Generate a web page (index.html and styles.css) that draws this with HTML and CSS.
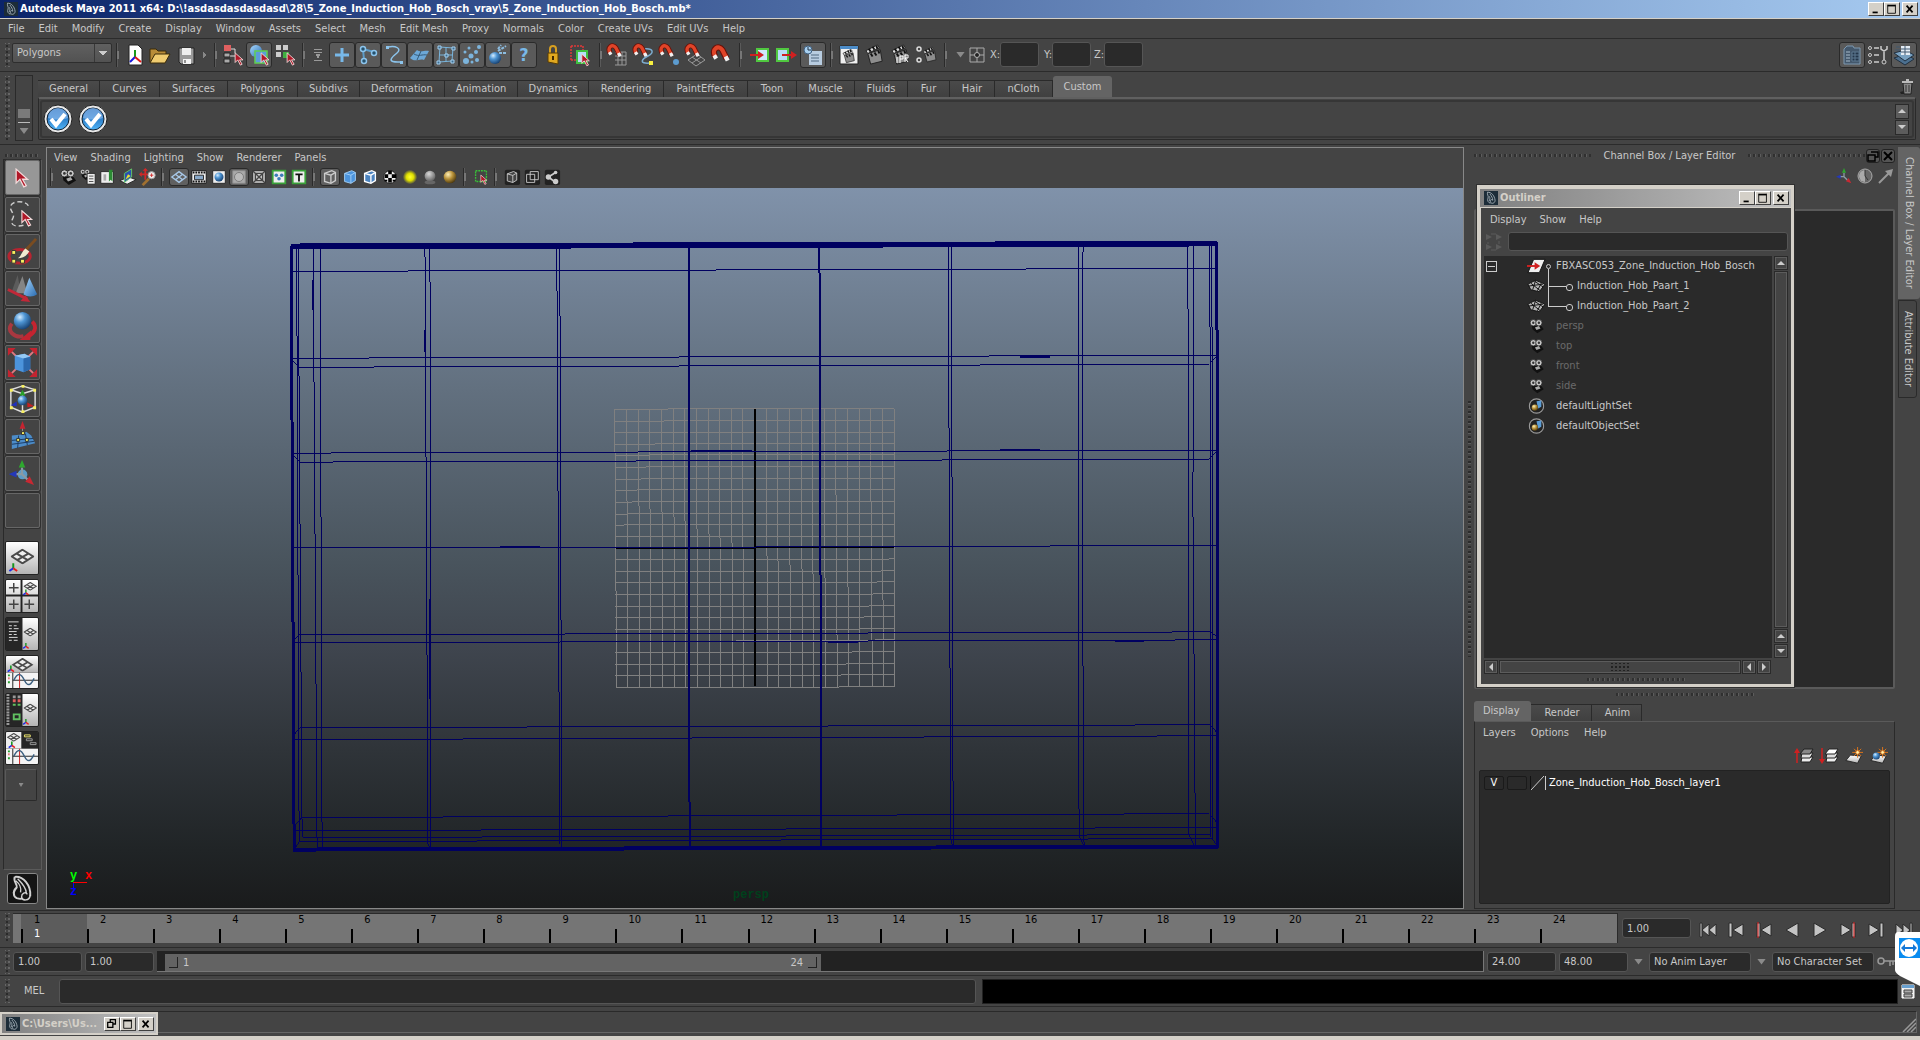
FILE: index.html
```html
<!DOCTYPE html>
<html lang="en">

<head>
    <meta charset="UTF-8">
    <meta name="viewport" content="width=device-width, initial-scale=1.0">
    <title>Autodesk Maya 2011 x64</title>
    <link rel="stylesheet" href="styles.css">
</head>

<body>
    <!-- shared icons -->
    <svg class="defs" width="0" height="0" aria-hidden="true">
        <defs>
            <linearGradient id="gBlue" x1="0" y1="0" x2="1" y2="1">
                <stop offset="0" stop-color="#a8d8ff" />
                <stop offset="1" stop-color="#2a6cb0" />
            </linearGradient>
            <radialGradient id="gBall" cx=".35" cy=".3" r=".75">
                <stop offset="0" stop-color="#d4ecff" />
                <stop offset=".4" stop-color="#4f96d4" />
                <stop offset="1" stop-color="#153e6e" />
            </radialGradient>
            <radialGradient id="gGold" cx=".35" cy=".3" r=".8">
                <stop offset="0" stop-color="#fff0b8" />
                <stop offset=".45" stop-color="#b8923a" />
                <stop offset="1" stop-color="#3a2a08" />
            </radialGradient>
            <radialGradient id="gGrey" cx=".4" cy=".3" r=".75">
                <stop offset="0" stop-color="#d8d8d8" />
                <stop offset="1" stop-color="#5a5a5a" />
            </radialGradient>
            <radialGradient id="gGlow">
                <stop offset="0" stop-color="#ffff30" />
                <stop offset=".5" stop-color="#e0e000" />
                <stop offset="1" stop-color="#e0e000" stop-opacity="0" />
            </radialGradient>
            <linearGradient id="gPaper" x1="0" y1="0" x2="0" y2="1">
                <stop offset="0" stop-color="#ffffff" />
                <stop offset="1" stop-color="#b4b4b4" />
            </linearGradient>
            <linearGradient id="gCheck" x1="0" y1="0" x2="0" y2="1">
                <stop offset="0" stop-color="#0c4c9c" />
                <stop offset="1" stop-color="#50b4f8" />
            </linearGradient>
        </defs>
        <symbol id="maya" viewBox="0 0 24 24">
            <rect width="24" height="24" fill="#1c2c38" />
            <path d="M6 2c7 0 12 6 13 14M6 2c-1 4 2 6 1 10-2 4 0 8 4 9M10 5c3 4 5 7 5 11M9 9c2 3 1 6 0 8M19 16c0 5-6 7-8 3-1-3 2-6 4-3" fill="none" stroke="#a8b4bc" stroke-width="1.500" />
        </symbol>
        <symbol id="cursor" viewBox="0 0 12 16">
            <path d="M1 1v11l3-3 3 6 2-1-3-5h4z" fill="#b01828" stroke="#f4dcdc" />
        </symbol>
        <symbol id="magnet" viewBox="0 0 24 24">
            <path d="M5 12C1 5 8 0 12 6l4 8" fill="none" stroke="#6a1008" stroke-width="6" />
            <path d="M5 12C1 5 8 0 12 6l4 8" fill="none" stroke="#e04428" stroke-width="4" />
            <path d="M4 11l2 3M15 12l2 4" stroke="#f0f0f0" stroke-width="4" />
        </symbol>
        <symbol id="clap" viewBox="0 0 24 24">
            <path d="M5 11l13-4 2 12-12 3z" fill="#8d8d8d" stroke="#202020" />
            <path d="M3 8L15 2l2 3L5 11z" fill="#dcdcdc" stroke="#222" />
            <path d="M6 6l2 3M10 4l2 3M14 3l1 3M8 11l2 3M12 10l2 3M16 8l1 3" stroke="#111" stroke-width="2" />
        </symbol>
        <symbol id="camera" viewBox="0 0 20 20">
            <path d="M4 9l12 1 3 4-8 5-6-5z" fill="#111" />
            <circle cx="6" cy="6" r="4" fill="#c8c8c8" stroke="#222" />
            <circle cx="13" cy="6" r="4" fill="#c8c8c8" stroke="#222" />
            <circle cx="6" cy="6" r="1.500" fill="#333" />
            <circle cx="13" cy="6" r="1.500" fill="#333" />
            <path d="M8 12l5-2 2 3-5 2z" fill="#aaa" />
        </symbol>
        <symbol id="axes" viewBox="0 0 24 24">
            <path d="M12 13V7M12 13H6M12 13l5 5" stroke="#8a9aa4" stroke-width="2" />
            <path d="M9 7l3-7 3 7z" fill="#2ea82e" />
            <path d="M7 10v6l-7-3z" fill="#2438b8" />
            <path d="M15 20l4-5 4 8z" fill="#c82832" />
        </symbol>
        <symbol id="gridicon" viewBox="0 0 24 16">
            <path d="M12 1L23 8 12 15 1 8zM6 5l12 7M18 5L6 12" fill="#eee" stroke="#4a4a4a" stroke-width="2" />
        </symbol>
        <symbol id="tripod" viewBox="0 0 10 10">
            <path d="M5 6V1" stroke="#14941c" stroke-width="2" />
            <path d="M5 6L1 9" stroke="#1c2ce8" stroke-width="2" />
            <path d="M5 6l4 3" stroke="#e81c1c" stroke-width="2" />
        </symbol>
        <symbol id="curve" viewBox="0 0 33 16">
            <rect width="33" height="16" fill="#f4f4f4" />
            <path d="M7 0v16M7 8h26" stroke="#222" />
            <path d="M3 2v2M3 9v2" stroke="#28a030" stroke-width="2" />
            <path d="M3 5v2M14 0v16" stroke="#d02020" />
            <path d="M8 8C12 0 15 0 19 8s7 4 10-2" fill="none" stroke="#3c6080" stroke-width="1.500" />
        </symbol>
        <symbol id="cube" viewBox="0 0 16 16">
            <path d="M2 4l8-3 4 2v9l-5 3-7-2z" />
            <path d="M2 4l7 2 5-3M9 6v9" fill="none" />
        </symbol>
        <symbol id="mesh" viewBox="0 0 20 16">
            <path d="M1 6l8-4 10 4-6 8-9-2z" fill="#b4b4b4" stroke="#111" />
            <path d="M4 5l10 8M8 3l9 6M9 2L6 12M15 5l-4 8M2 8l15-2" stroke="#111" />
        </symbol>
        <symbol id="set" viewBox="0 0 20 20">
            <circle cx="10" cy="10" r="9" fill="#222" stroke="#999" stroke-width="1.500" />
            <path d="M10 4l6-1v8l-4 2z" fill="#5c9cd4" />
            <circle cx="8" cy="12" r="4" fill="url(#gGold)" />
        </symbol>
        <symbol id="checkball" viewBox="0 0 30 30">
            <circle cx="15" cy="15" r="14" fill="#e8e8e8" stroke="#202020" />
            <circle cx="15" cy="15" r="11" fill="url(#gCheck)" stroke="#123" />
            <path d="M5 14a10 10 0 0 1 20 0c-6 2-14 2-20 0z" fill="#8cbcf0" fill-opacity=".7" />
            <path d="M8 15l5 6 9-11" fill="none" stroke="#fff" stroke-width="4" />
        </symbol>
        <symbol id="layers" viewBox="0 0 20 16">
            <path d="M8 9h11l-3 5H7z" fill="#eee" stroke="#222" />
            <path d="M8 5h11l-3 5H7z" fill="#ddd" stroke="#222" />
            <path d="M10 1h9l-3 5H6z" stroke="#222" />
        </symbol>
        <symbol id="sheet" viewBox="0 0 20 20">
            <path d="M6 9l12 1-4 8-13-3z" fill="url(#gPaper)" stroke="#222" />
            <path d="M14 0v12M8 6h12M10 2l8 8M18 2l-8 8" stroke="#e87818" />
            <circle cx="14" cy="6" r="2" fill="#fff4b0" stroke="#e87818" />
        </symbol>
    </svg>

    <header class="titlebar">
        <svg class="i16"><use href="#maya" /></svg>
        <h1>Autodesk Maya 2011 x64: D:\!asdasdasdasdasd\28\5_Zone_Induction_Hob_Bosch_vray\5_Zone_Induction_Hob_Bosch.mb*</h1>
        <div class="winbtns">
            <button type="button" aria-label="Minimize"><svg viewBox="0 0 16 14"><path d="M4 11h6" stroke="#000" stroke-width="2" /></svg></button>
            <button type="button" aria-label="Maximize"><svg viewBox="0 0 16 14"><path d="M3 2v10h9V2" fill="none" stroke="#000" /><path d="M3 3h9" stroke="#000" stroke-width="2" /></svg></button>
            <button type="button" class="close" aria-label="Close"><svg viewBox="0 0 16 14"><path d="M4 3l7 8M11 3l-7 8" stroke="#000" stroke-width="2" /></svg></button>
        </div>
    </header>

    <nav class="menubar">
        <button type="button">File</button><button type="button">Edit</button><button type="button">Modify</button><button type="button">Create</button><button type="button">Display</button><button type="button">Window</button><button type="button">Assets</button><button type="button">Select</button><button type="button">Mesh</button><button type="button">Edit Mesh</button><button type="button">Proxy</button><button type="button">Normals</button><button type="button">Color</button><button type="button">Create UVs</button><button type="button">Edit UVs</button><button type="button">Help</button>
    </nav>

    <section class="status">
        <span class="grip"></span>
        <select class="menuset" aria-label="Menu set">
            <option>Polygons</option>
        </select>
        <i class="sep"></i>
        <button type="button" class="tool" aria-label="New scene"><svg viewBox="0 0 24 24"><path d="M6 2h9l4 4v16H6z" fill="#fff" stroke="#222" /><path d="M12 14V7" stroke="#1a9a1a" stroke-width="2" /><path d="M12 14l-5 5" stroke="#1818e0" stroke-width="2" /><path d="M12 14l6 5" stroke="#e01818" stroke-width="2" /></svg></button>
        <button type="button" class="tool" aria-label="Open scene"><svg viewBox="0 0 24 24"><path d="M1 19V6h6l2 2h8v4" fill="#b88c38" stroke="#3a2a08" /><path d="M1 20l5-9h15l-5 9z" fill="#f0cc70" stroke="#3a2a08" /></svg></button>
        <button type="button" class="tool" aria-label="Save scene"><svg viewBox="0 0 24 24"><path d="M4 5h15v16H6l-2-2z" fill="#9a9a9a" stroke="#222" /><path d="M7 5h9v7H7z" fill="#eee" /><path d="M8 16h8v5H8z" fill="#f4f4f4" /><path d="M10 17v3" stroke="#333" /></svg></button>
        <i class="more"></i>
        <i class="sep"></i>
        <button type="button" class="tool" aria-label="Select by hierarchy"><svg viewBox="0 0 24 24"><path d="M3 2h7v6H3z" fill="#e06060" /><path d="M3 10h6v4H3zM3 16h6v4H3z" fill="#aaa" stroke="#222" /><path d="M10 6h4v4M9 13h5" fill="none" stroke="#ddd" /><use href="#cursor" x="13" y="9" width="11" height="14" /></svg></button>
        <button type="button" class="tool on" aria-label="Select by object"><svg viewBox="0 0 24 24"><circle cx="9" cy="8" r="6" fill="url(#gBlue)" /><path d="M8 8h12v12H8z" fill="#5c9cd8" stroke="#60d050" stroke-width="1.500" /><use href="#cursor" x="13" y="9" width="11" height="14" /></svg></button>
        <button type="button" class="tool" aria-label="Select by component"><svg viewBox="0 0 24 24"><path d="M3 2h5v5H3zM10 2h5v5h-5zM3 9h5v5H3z" fill="#ccc" /><path d="M10 9h6v6h-6z" fill="#40b040" /><use href="#cursor" x="13" y="9" width="11" height="14" /></svg></button>
        <i class="sep"></i>
        <i class="mask"></i>
        <button type="button" class="tool on" aria-label="Handles"><svg viewBox="0 0 24 24"><path d="M12 5v14M5 12h14" stroke="#78b8e8" stroke-width="3" /></svg></button>
        <button type="button" class="tool on" aria-label="Joints"><svg viewBox="0 0 24 24"><path d="M7 6l11 3M7 6l1 11" stroke="#5c9cc8" stroke-width="2" /><circle cx="7" cy="6" r="2.500" fill="#26526e" stroke="#8cc4ec" stroke-width="1.500" /><circle cx="18" cy="10" r="2.500" fill="#26526e" stroke="#8cc4ec" stroke-width="1.500" /><circle cx="8" cy="18" r="2.500" fill="#26526e" stroke="#8cc4ec" stroke-width="1.500" /></svg></button>
        <button type="button" class="tool on" aria-label="Curves"><svg viewBox="0 0 24 24"><path d="M6 4c8-2 14 2 9 6s-12 10 4 9" fill="none" stroke="#8cc4ec" stroke-width="1.500" /><path d="M4 3h3v3H4zM18 18h3v3h-3z" fill="#8cc4ec" /></svg></button>
        <button type="button" class="tool on" aria-label="Surfaces"><svg viewBox="0 0 24 24"><path d="M2 15l7-8c4 3 7 0 12 1l-5 9c-5-2-9 3-14-2z" fill="#6ca8d8" /><path d="M6 11c5 3 8 0 13 1M13 8l-4 9" stroke="#365a78" fill="none" /></svg></button>
        <button type="button" class="tool on" aria-label="Deformations"><svg viewBox="0 0 24 24"><path d="M6 4l13 1-1 13-13 1zM12 4v15M5 12h14" fill="none" stroke="#78b4dc" /><path d="M4 3h3v3H4zM18 4h3v3h-3zM3 18h3v3H3zM17 17h3v3h-3zM11 11h3v3h-3z" fill="#3c6c90" stroke="#a4d0f0" /></svg></button>
        <button type="button" class="tool on" aria-label="Dynamics"><svg viewBox="0 0 24 24"><g fill="#7cb4dc"><circle cx="6" cy="18" r="3" /><circle cx="11" cy="13" r="2.500" /><circle cx="16" cy="9" r="2" /><circle cx="19" cy="4" r="2" /><circle cx="5" cy="9" r="1.500" /><circle cx="9" cy="5" r="1.500" /><circle cx="17" cy="17" r="2" /><circle cx="12" cy="19" r="1.500" /></g></svg></button>
        <button type="button" class="tool on" aria-label="Rendering"><svg viewBox="0 0 24 24"><circle cx="9" cy="15" r="6" fill="url(#gBall)" /><path d="M12 8l8-5M13 10h8M12 6l3-4" stroke="#8cbce0" stroke-width="2" stroke-dasharray="3 1" /></svg></button>
        <button type="button" class="tool on help" aria-label="Miscellaneous">?</button>
        <i class="gap3"></i>
        <button type="button" class="tool" aria-label="Lock selection"><svg viewBox="0 0 24 24"><path d="M9 11V6c0-4 6-4 6 0v5" fill="none" stroke="#d8a020" stroke-width="2" /><path d="M7 10h10v11l-10-2z" fill="#e0a820" stroke="#5a3c00" /><path d="M12 13v4" stroke="#402800" stroke-width="2" /></svg></button>
        <button type="button" class="tool" aria-label="Highlight selection"><svg viewBox="0 0 24 24"><path d="M4 3h12M4 3v14M4 17h5M16 3v4" fill="none" stroke="#e03838" stroke-width="1.500" stroke-dasharray="2 1" /><path d="M10 8h10v12H10z" fill="#b8dcf8" stroke="#40c040" stroke-width="2" /><use href="#cursor" x="14" y="10" width="10" height="14" /></svg></button>
        <i class="gap3"></i>
        <i class="sep"></i>
        <button type="button" class="tool" aria-label="Snap to grids"><svg viewBox="0 0 24 24"><path d="M9 9h11v13H9M12 9v13M16 9v13M9 13h11M9 17h11" fill="none" stroke="#999" /><use href="#magnet" width="20" height="20" /></svg></button>
        <button type="button" class="tool" aria-label="Snap to curves"><svg viewBox="0 0 24 24"><path d="M12 6c10-1 10 4 4 7s-10 8 2 7" fill="none" stroke="#7cacd0" stroke-width="1.500" /><path d="M17 18h4v4h-4z" fill="#f8f040" /><use href="#magnet" width="20" height="20" /></svg></button>
        <button type="button" class="tool" aria-label="Snap to points"><svg viewBox="0 0 24 24"><use href="#magnet" width="20" height="20" /><circle cx="18" cy="19" r="3" fill="#5c9cd0" /></svg></button>
        <button type="button" class="tool" aria-label="Snap to view planes"><svg viewBox="0 0 24 24"><path d="M4 17l9-6 8 6-9 6zM8 14l9 6M17 14l-9 6" fill="none" stroke="#999" /><use href="#magnet" width="20" height="20" /></svg></button>
        <button type="button" class="tool" aria-label="Make live"><svg viewBox="0 0 24 24"><use href="#magnet" y="1" width="25" height="25" /></svg></button>
        <i class="sep"></i>
        <i class="gap3"></i>
        <button type="button" class="tool" aria-label="Inputs"><svg viewBox="0 0 24 24"><path d="M8 6h11v12H8z" fill="#d0e8fc" stroke="#50c840" stroke-width="2" /><path d="M1 12h9" stroke="#d02020" stroke-width="2" /><path d="M9 8l6 4-6 4z" fill="#d02020" /></svg></button>
        <button type="button" class="tool" aria-label="Outputs"><svg viewBox="0 0 24 24"><path d="M2 6h11v12H2z" fill="#b8dcf8" stroke="#50c840" stroke-width="2" /><path d="M7 12h11" stroke="#d02020" stroke-width="2" /><path d="M16 8l6 4-6 4z" fill="#d02020" /></svg></button>
        <button type="button" class="tool on" aria-label="Construction history"><svg viewBox="0 0 24 24"><path d="M8 8h13v14H8z" fill="#b8cce0" /><path d="M10 12h8M10 15h8M10 18h8" stroke="#506880" /><circle cx="7" cy="7" r="4" fill="#a8d0f0" stroke="#406080" /><path d="M7 4v3h3" fill="none" stroke="#234" /></svg></button>
        <i class="sep"></i>
        <button type="button" class="tool" aria-label="Render view"><svg viewBox="0 0 24 24"><path d="M3 3h18v18H3z" fill="#f0f0f0" stroke="#222" /><path d="M3 3h18v3H3z" fill="#4c8cc8" /><use href="#clap" x="4" y="5" width="16" height="16" /></svg></button>
        <button type="button" class="tool" aria-label="Render frame"><svg viewBox="0 0 24 24"><use href="#clap" width="23" height="23" /></svg></button>
        <button type="button" class="tool" aria-label="IPR render"><svg viewBox="0 0 24 24"><use href="#clap" width="23" height="23" /><path d="M8 14v6M11 20v-7h3v3h-3M16 19v-7h3v3h-3l3 4" stroke="#fff" fill="none" /></svg></button>
        <button type="button" class="tool" aria-label="Render settings"><svg viewBox="0 0 24 24"><use href="#clap" x="6" width="18" height="23" /><circle cx="4" cy="6" r="2" fill="none" stroke="#ddd" stroke-width="1.500" /><circle cx="4" cy="17" r="2" fill="none" stroke="#ddd" stroke-width="1.500" /></svg></button>
        <i class="sep"></i>
        <button type="button" class="droparrow" aria-label="Input mode"></button>
        <svg class="xyz" viewBox="0 0 16 16"><path d="M1 1h14v14H1zM8 1v4M8 11v4M1 8h4M11 8h4" fill="none" stroke="#aaa" /><circle cx="8" cy="8" r="2.500" fill="#222" stroke="#bbb" /></svg>
        <label for="fx">X:</label><input id="fx" type="text">
        <label for="fy">Y:</label><input id="fy" type="text">
        <label for="fz">Z:</label><input id="fz" type="text">
        <div class="right">
            <button type="button" class="tool on" aria-label="Attribute Editor"><svg viewBox="0 0 24 24"><path d="M4 6l3-3h6l1 2h6v16H4z" fill="#44586c" stroke="#7c98b0" /><path d="M6 9h4M6 12h4M6 15h4M6 18h4" stroke="#a8bccc" /><path d="M12 9h7v9h-7zM15 9v9M12 12h7M12 15h7" fill="#24364a" stroke="#5c7890" /></svg></button>
            <button type="button" class="tool" aria-label="Tool Settings"><svg viewBox="0 0 24 24"><g fill="none" stroke="#ccc"><circle cx="4" cy="5" r="1.500" /><circle cx="4" cy="12" r="1.500" /><circle cx="4" cy="19" r="1.500" /><path d="M8 5h5M8 12h5M8 19h5M18 8v9M15 3v3l3 2 3-2V3" stroke-width="1.500" /><circle cx="18" cy="19" r="2" /></g></svg></button>
            <button type="button" class="tool on" aria-label="Channel Box"><svg viewBox="0 0 24 24"><path d="M2 15l12-4 8 5-9 6z" fill="#4c7090" stroke="#203040" /><path d="M2 10l11-3 9 5-9 6z" fill="#78a0c0" stroke="#203040" /><path d="M9 3h9v9H9z" fill="#e4ecf4" /><path d="M9 6h9M9 9h9M13 3v9M3 7h5M4 4h4" stroke="#405870" /></svg></button>
        </div>
    </section>

    <section class="shelf">
        <span class="grip"></span>
        <div class="shelfmenu"><button type="button" class="sq" aria-label="Shelf tabs"></button><button type="button" class="droparrow" aria-label="Shelf menu"></button></div>
        <div class="shelfmain">
            <div class="tabs shelftabs">
                <button type="button">General</button><button type="button">Curves</button><button type="button">Surfaces</button><button type="button">Polygons</button><button type="button">Subdivs</button><button type="button">Deformation</button><button type="button">Animation</button><button type="button">Dynamics</button><button type="button">Rendering</button><button type="button">PaintEffects</button><button type="button">Toon</button><button type="button">Muscle</button><button type="button">Fluids</button><button type="button">Fur</button><button type="button">Hair</button><button type="button">nCloth</button><button type="button" class="active">Custom</button>
                <svg class="trash" viewBox="0 0 14 16"><path d="M0 13l4-1v3H1z" fill="#222" /><path d="M3 4l1 11h7l1-11z" fill="#888" stroke="#222" /><path d="M2 3h11M6 1h3" stroke="#bbb" stroke-width="2" /><path d="M6 6v7M9 6v7" stroke="#333" /></svg>
            </div>
            <div class="shelfbody">
                <div class="shelfinner">
                    <button type="button" class="shelfbtn" aria-label="Shelf item 1"><svg viewBox="0 0 30 30"><use href="#checkball" /></svg></button>
                    <button type="button" class="shelfbtn" aria-label="Shelf item 2"><svg viewBox="0 0 30 30"><use href="#checkball" /></svg></button>
                    <div class="spin"><button type="button" class="arr up" aria-label="Up"></button><button type="button" class="arr down" aria-label="Down"></button></div>
                </div>
            </div>
        </div>
    </section>

    <main class="work">
        <aside class="toolbox">
            <span class="hgrip"></span>
            <div class="tbframe">
                <button type="button" class="big active" aria-label="Select Tool"><svg viewBox="0 0 34 34"><use href="#cursor" x="9" y="7" width="16" height="21" /></svg></button>
                <button type="button" class="big" aria-label="Lasso Tool"><svg viewBox="0 0 34 34"><path d="M18 28c-7 2-15 1-11-7 3-5-4-8-2-13 2-6 16-5 18 0" fill="none" stroke="#ccc" stroke-width="1.500" stroke-dasharray="5 3" /><use href="#cursor" x="15" y="12" width="14" height="18" /></svg></button>
                <button type="button" class="big" aria-label="Paint Selection Tool"><svg viewBox="0 0 34 34"><ellipse cx="14" cy="22" rx="11" ry="7" fill="none" stroke="#b82430" stroke-width="3" /><path d="M31 4L20 16" stroke="#7a4c20" stroke-width="3" /><path d="M20 14l4 3c-3 5-7 7-12 7 4-2 4-7 8-10z" fill="#f0ead0" /><path d="M6 16h4v4H6zM6 25h4v4H6zM15 25h4v4h-4z" fill="#f8f060" stroke="#333" /></svg></button>
                <button type="button" class="big" aria-label="Move Tool"><svg viewBox="0 0 34 34"><path d="M6 20L12 3l3 17z" fill="#5c5c5c" /><path d="M10 22l7-18 5 18z" fill="#858585" /><path d="M18 23l6-17 8 17c-4 3-10 3-14 0z" fill="url(#gBlue)" /><path d="M2 18l20 10" stroke="#c02838" stroke-width="3" /><path d="M20 24l5 7-10-1z" fill="#c02838" /></svg></button>
                <button type="button" class="big" aria-label="Rotate Tool"><svg viewBox="0 0 34 34"><path d="M6 15c-6 8 3 15 12 13" fill="none" stroke="#a83840" stroke-width="4" /><path d="M27 13c6 6 2 12-4 15" fill="none" stroke="#c42430" stroke-width="4" /><path d="M14 32l11 0 1-10z" fill="#c42430" /><circle cx="17" cy="12" r="9" fill="url(#gBall)" /></svg></button>
                <button type="button" class="big" aria-label="Scale Tool"><svg viewBox="0 0 34 34"><path d="M6 6l22 22M28 6L6 28" stroke="#e07880" stroke-width="2" /><path d="M2 2h8l-8 8zM32 2h-8l8 8zM2 32h8l-8-8zM32 32h-8l8-8z" fill="#c42430" /><path d="M9 10l10-2 6 3v13l-7 3-9-3z" fill="#4c94dc" /><path d="M9 10l9 3 7-2-6-3z" fill="#94c8f4" /><path d="M18 13v14l7-3V11z" fill="#2c68ac" /></svg></button>
                <button type="button" class="big" aria-label="Universal Manipulator"><svg viewBox="0 0 34 34"><path d="M5 7l12-4 13 4v18l-13 5-12-5zM5 7l12 4 13-4M17 11v19" fill="none" stroke="#ddd" stroke-width="1.500" /><circle cx="17" cy="18" r="5" fill="url(#gBall)" /><path d="M14 13l3-6 3 6z" fill="#28a028" /><path d="M5 23l6-4v5z" fill="#2030c0" /><path d="M29 24l-7-4v5z" fill="#c82020" /><path d="M4 6h3v3H4zM28 6h3v3h-3zM4 24h3v3H4zM28 24h3v3h-3zM16 28h3v3h-3zM16 2h3v3h-3z" fill="#f8f060" /></svg></button>
                <button type="button" class="big" aria-label="Soft Modification Tool"><svg viewBox="0 0 34 34"><path d="M6 16l10-1 5-3 5 4 4 8-24 6z" fill="#4c8cc8" /><path d="M6 21l22-2M6 25l23-3M13 16l-1 13M20 14l2 12" stroke="#1c3c64" /><path d="M17 14V8" stroke="#888" /><path d="M14 9l3-8 3 8z" fill="#c42430" /><path d="M16 12h3v3h-3zM11 19h3v3h-3zM20 19h3v3h-3z" fill="#f8f060" stroke="#333" /></svg></button>
                <button type="button" class="big" aria-label="Show Manipulator Tool"><svg viewBox="0 0 34 34"><circle cx="17" cy="18" r="5" fill="#5c9cc8" /><use href="#axes" x="3" y="3" width="27" height="27" /></svg></button>
                <button type="button" class="big" aria-label="Last tool"></button>
                <div class="layouts">
                    <button type="button" class="lay" aria-label="Single perspective"><svg viewBox="0 0 33 33"><rect width="33" height="33" fill="url(#gPaper)" /><use href="#gridicon" x="5" y="7" width="24" height="16" /><use href="#tripod" x="2" y="21" width="11" height="10" /></svg></button>
                    <button type="button" class="lay" aria-label="Four view"><svg viewBox="0 0 33 33"><rect width="33" height="33" fill="url(#gPaper)" /><path d="M16 0v33M0 16h33" stroke="#222" stroke-width="2" /><path d="M8 3v10M3 8h10M8 20v10M3 25h10M24 20v10M19 25h10" stroke="#444" stroke-width="1.500" /><use href="#gridicon" x="18" y="2" width="14" height="9" /><use href="#tripod" x="17" y="9" width="7" height="7" /></svg></button>
                    <button type="button" class="lay" aria-label="Persp and Outliner"><svg viewBox="0 0 33 33"><rect width="33" height="33" fill="#262626" /><rect x="17" width="16" height="33" fill="url(#gPaper)" /><path d="M2 4h11M3 8h3M8 8h3M3 11h3M8 11h5M3 14h8M3 17h3M8 17h3M3 20h9M3 23h3M8 23h4" stroke="#ddd" /><use href="#gridicon" x="18" y="10" width="14" height="9" /><use href="#tripod" x="17" y="25" width="7" height="7" /></svg></button>
                    <button type="button" class="lay" aria-label="Persp and Graph"><svg viewBox="0 0 33 33"><rect width="33" height="17" fill="url(#gPaper)" /><use href="#gridicon" x="5" y="2" width="24" height="14" /><use href="#tripod" x="1" y="9" width="8" height="8" /><use href="#curve" y="17" width="33" height="16" /></svg></button>
                    <button type="button" class="lay" aria-label="Hypershade and Persp"><svg viewBox="0 0 33 33"><rect width="33" height="33" fill="#262626" /><path d="M2 0v33" stroke="#999" stroke-width="3" stroke-dasharray="2 1" /><path d="M7 3h3M12 3h3" stroke="#999" stroke-width="3" /><path d="M7 7h3M12 7h3" stroke="#e06060" stroke-width="3" /><path d="M7 11h3M12 11h3M8 21h6v5H8z" stroke="#60c060" stroke-width="2" fill="none" /><rect x="17" width="16" height="33" fill="url(#gPaper)" /><use href="#gridicon" x="18" y="10" width="14" height="9" /><use href="#tripod" x="17" y="25" width="7" height="7" /></svg></button>
                    <button type="button" class="lay" aria-label="Persp, Graph, Hypergraph"><svg viewBox="0 0 33 33"><rect width="16" height="17" fill="#eee" /><rect x="16" width="17" height="17" fill="#262626" /><use href="#gridicon" x="1" y="1" width="14" height="9" /><use href="#tripod" x="2" y="9" width="8" height="8" /><path d="M19 3h6v2h-6z" stroke="#f0e870" fill="none" /><path d="M21 7h6v2h-6zM25 11h6v2h-6z" stroke="#999" fill="none" /><use href="#curve" y="17" width="33" height="16" /></svg></button>
                    <button type="button" class="lay blank" aria-label="Layout menu"><i class="tri"></i></button>
                </div>
            </div>
            <button type="button" class="logo" aria-label="Maya"><svg viewBox="0 0 30 30"><rect width="30" height="30" fill="#141414" /><g fill="none" stroke="#d0d0d0"><path d="M7 3c9-1 17 9 16 20M7 3c-2 5 3 7 2 11-4 3-4 9 0 11 3 1 5 1 6 0" stroke-width="2" /><path d="M10 5c5 5 9 10 9 15M8 7c4 3 6 8 5 12M23 22c-1 6-8 6-9 2 0-4 4-6 6-3M9 14c-1 3-4 2-3 7" stroke-width="1.500" /></g></svg></button>
        </aside>

        <section class="panel">
            <nav class="panelmenu">
                <button type="button">View</button><button type="button">Shading</button><button type="button">Lighting</button><button type="button">Show</button><button type="button">Renderer</button><button type="button">Panels</button>
            </nav>
            <div class="panelbar">
                <i class="sep"></i>
                <button type="button" aria-label="Select camera"><svg viewBox="0 0 20 20"><use href="#camera" /></svg></button>
                <button type="button" aria-label="Camera attributes"><svg viewBox="0 0 20 20"><use href="#camera" width="14" height="14" /><path d="M9 6h9v12H9z" fill="#eee" stroke="#222" /><path d="M11 9h5M11 12h5M11 15h5" stroke="#444" /></svg></button>
                <button type="button" aria-label="Bookmarks"><svg viewBox="0 0 20 20"><path d="M2 4h14v13H2z" fill="#eee" stroke="#222" /><path d="M5 7h3v7H5z" fill="#aaa" /><path d="M11 2h4v13l-2-2-2 2z" fill="#2c8c34" /></svg></button>
                <button type="button" aria-label="Image plane"><svg viewBox="0 0 20 20"><path d="M1 14l10-4 8 3-10 5z" fill="#eee" stroke="#222" /><path d="M6 6l8-5v9l-8 6z" fill="#2850b0" stroke="#6c6" /><path d="M7 13l3-6 3 2z" fill="#e8e030" /></svg></button>
                <button type="button" aria-label="2D pan/zoom"><svg viewBox="0 0 20 20"><path d="M7 1v12M1 7h12" stroke="#d02828" stroke-width="2" /><path d="M4 3l3-3 3 3zM3 4L0 7l3 3z" fill="#d02828" /><path d="M11 12l-7 7" stroke="#a07030" stroke-width="3" /><circle cx="14" cy="8" r="4" fill="#eee" stroke="#999" /><path d="M12 8h4M14 6v4" stroke="#d02828" /></svg></button>
                <i class="sep"></i>
                <button type="button" class="on" aria-label="Grid"><svg viewBox="0 0 20 20"><path d="M2 10l8-6 8 6-8 6zM6 7l8 6M14 7l-8 6" fill="none" stroke="#a8c8e8" stroke-width="1.500" /></svg></button>
                <button type="button" aria-label="Film gate"><svg viewBox="0 0 20 20"><path d="M2 3h16v14H2z" fill="#eee" stroke="#111" /><path d="M3 5h14M3 15h14" stroke="#111" stroke-width="2" stroke-dasharray="2 1" /><path d="M5 8h10v5H5z" fill="#88a8c8" stroke="#222" /></svg></button>
                <button type="button" aria-label="Resolution gate"><svg viewBox="0 0 20 20"><path d="M3 3h14v14H3z" fill="#eee" stroke="#222" /><circle cx="10" cy="10" r="5" fill="url(#gBall)" /></svg></button>
                <button type="button" class="on" aria-label="Gate mask"><svg viewBox="0 0 20 20"><path d="M3 3h14v14H3z" fill="#aaa" stroke="#888" /><circle cx="10" cy="10" r="5" fill="#bbb" stroke="#777" /></svg></button>
                <button type="button" aria-label="Field chart"><svg viewBox="0 0 20 20"><path d="M3 3h14v14H3z" fill="#ccc" stroke="#222" /><path d="M3 3l14 14M17 3L3 17M6 6h8v8H6z" fill="none" stroke="#444" stroke-width="1.500" /></svg></button>
                <button type="button" aria-label="Safe action"><svg viewBox="0 0 20 20"><path d="M3 3h14v14H3z" fill="#eee" stroke="#38a038" stroke-width="2" /><circle cx="7" cy="8" r="2" fill="#3c7cb8" /><circle cx="13" cy="8" r="2" fill="#3c7cb8" /><circle cx="10" cy="12" r="2" fill="#3c7cb8" /></svg></button>
                <button type="button" aria-label="Safe title"><svg viewBox="0 0 20 20"><path d="M3 3h14v14H3z" fill="#eee" stroke="#38a038" stroke-width="2" /><path d="M6 7h8M10 7v8" stroke="#111" stroke-width="2" /></svg></button>
                <i class="sep"></i>
                <button type="button" class="on" aria-label="Wireframe"><svg viewBox="0 0 20 20"><g fill="none" stroke="#ccc" stroke-width="1.500"><use href="#cube" x="2" y="2" width="16" height="16" /></g></svg></button>
                <button type="button" aria-label="Smooth shade"><svg viewBox="0 0 20 20"><g fill="#4c94dc" stroke="#a8d4f8"><use href="#cube" x="2" y="2" width="16" height="16" /></g></svg></button>
                <button type="button" aria-label="Wireframe on shaded"><svg viewBox="0 0 20 20"><g fill="#4c84c0" stroke="#fff" stroke-width="1.500"><use href="#cube" x="2" y="2" width="16" height="16" /></g></svg></button>
                <button type="button" aria-label="Textured"><svg viewBox="0 0 20 20"><circle cx="10" cy="10" r="7" fill="#eee" stroke="#111" /><path d="M8 3h4v4H8zM4 7h4v4H4zM12 7h5v4h-5zM8 11h4v5H8zM4 13h3v2H4zM13 13h3v2h-3z" fill="#000" /></svg></button>
                <button type="button" aria-label="Use all lights"><svg viewBox="0 0 20 20"><circle cx="10" cy="10" r="8" fill="url(#gGlow)" /></svg></button>
                <button type="button" aria-label="Shadows"><svg viewBox="0 0 20 20"><ellipse cx="10" cy="16" rx="6" ry="2" fill="#666" /><circle cx="10" cy="9" r="6" fill="url(#gGrey)" /></svg></button>
                <button type="button" aria-label="High quality"><svg viewBox="0 0 20 20"><circle cx="10" cy="10" r="7" fill="url(#gGold)" /></svg></button>
                <i class="sep"></i>
                <button type="button" aria-label="Isolate select"><svg viewBox="0 0 20 20"><path d="M4 3h12v12H4z" fill="none" stroke="#38c038" stroke-width="1.500" stroke-dasharray="2 1" /><use href="#cursor" x="9" y="7" width="9" height="12" /></svg></button>
                <i class="sep"></i>
                <button type="button" aria-label="X-ray"><svg viewBox="0 0 20 20"><rect x="2" y="2" width="17" height="17" rx="2" fill="#222" /><g fill="#444" stroke="#ddd"><use href="#cube" x="3" y="3" width="14" height="14" /></g></svg></button>
                <button type="button" aria-label="X-ray active"><svg viewBox="0 0 20 20"><rect x="2" y="2" width="17" height="17" rx="2" fill="#222" /><path d="M4 7h9v9H4zM8 4h9v9H8z" fill="none" stroke="#ccc" /></svg></button>
                <button type="button" aria-label="X-ray joints"><svg viewBox="0 0 20 20"><rect x="2" y="2" width="17" height="17" rx="2" fill="#222" /><path d="M14 5L6 10l8 6" fill="none" stroke="#ccc" stroke-width="2" /><circle cx="14" cy="5" r="2" fill="#ccc" /><circle cx="6" cy="10" r="3" fill="#ccc" /><circle cx="14" cy="15" r="3" fill="#ccc" /></svg></button>
            </div>
            <div class="view">
                <!-- persp view, coordinates in window space -->
                <svg viewBox="47 188 1416 721" preserveAspectRatio="xMidYMid meet" shape-rendering="crispEdges">
                    <g fill="none" stroke="#808080" stroke-width="1">
                        <path d="M615 409.500L894 408.500M615 421.500L894 420.500M615 432.500H894M615 444.500L894 443.500M615 455.500L894 454.500M615 467.500L894 466.500M615 479.500L894 478.500M615 490.500L894 489.500M615 502.500L894 501.500M615 514.500L894 513.500M615 525.500L894 524.500M615 537.500L894 536.500M615 560.500L894 559.500M615 572.500L894 571.500M615 583.500L894 582.500M615 595.500L894 594.500M615 607.500L894 606.500M615 618.500L894 617.500M615 630.500L894 629.500M615 642.500L894 640.500M615 653.500L894 652.500M615 665.500L894 664.500M615 676.500L894 675.500M616 688.500L894 687.500" />
                        <path d="M614.500 409L616.500 688M626.500 409L627.500 688M638.500 409L639.500 688M649.500 409L650.500 688M661.500 409L662.500 688M673.500 409L674.500 688M684.500 409L685.500 688M696.500 409L697.500 688M708.500 409L709.500 688M719.500 409L720.500 688M731.500 409L732.500 688M742.500 409L743.500 688M766.500 409L767.500 688M777.500 409L778.500 688M789.500 409L790.500 688M801.500 409L802.500 688M812.500 409L813.500 688M824.500 409L825.500 688M835.500 409L837.500 688M847.500 409L848.500 688M859.500 409V688M870.500 409L872.500 688M882.500 409L883.500 688M894.500 409V688" />
                    </g>
                    <path d="M755 409V687M616 549H755M755 548H894" fill="none" stroke="#000" stroke-width="2" />
                    <g fill="none" stroke="#000060">
                        <path d="M296 247L298.500 842M297.500 247L301.500 838M312.500 247L316.500 852M319.500 247L321.500 850M424.500 246L427.500 845L430 850M429.500 246L430.500 850M556.500 246L559.500 845M559.500 246L561.500 850M948.500 243L951 840L953 848M951.500 243L953.500 848M1078.500 243L1079.500 837L1085 848M1083.500 243L1082.500 500L1084.500 848M1188.500 243L1189.500 836L1195 847M1194.500 243L1193.500 500L1196 847M1210.500 243L1211.500 838M1212.500 243L1213.500 840" />
                        <path d="M291 271.500L1217 268.500M291 358.500L1217 355.500M292 361L299 367.500L1210 364.500L1217 357M292 453.500L1217 450.500M292 455L299 462.500L1210 459.500L1217 452M292 548.500L500 547.500H756L757 546.500H1050L1220 545.500M293 641L299 635.500L1211 632.500L1217 637M293 643.500L1218 640.500M294 735L299 728.500L1211 725.500L1218 734M294 740.500L1218 736.500M294 827L301 818.500L1210 814.500L1218 824M294 831.500L1218 828.500M302 838.500L1211 835.500M299 842.500L1213 839.500M294 850L299 842M1213 840L1218 847" />
                        <path d="M312 280V310M425 330V352M429.500 600V700M500 547.500H540M691 451.500H752M1020 357.500H1050M1000 450.500H1040M828 642.500H858M1115 641.500H1145" stroke-width="2" />
                        <path d="M688.500 245L689.500 850M819.500 244L821.500 849" stroke-width="2" />
                        <path d="M290.500 246L293.500 852M1217.500 242L1218.500 849" stroke-width="3" />
                        <path d="M290 247L1218 244" stroke-width="5" />
                        <path d="M294 245L300 244L1209 241.500L1217 243" stroke-width="1" />
                        <path d="M292 850.500L1219 847.500" stroke-width="4" />
                    </g>
                    <path d="M72 883.500h14" stroke="#f00" />
                    <path d="M72.500 884v6" stroke="#00f" />
                    <g class="axis">
                        <text x="69" y="880" fill="#0f0">y</text>
                        <text x="84" y="880" fill="#f00">x</text>
                        <text x="69" y="896" fill="#00f">z</text>
                        <text x="733" y="899" fill="#00401c">persp</text>
                    </g>
                </svg>
            </div>
        </section>

        <span class="vsplit"></span>

        <aside class="dock">
            <div class="docktitle"><i class="dots"></i><span>Channel Box / Layer Editor</span><i class="dots"></i>
                <button type="button" aria-label="Float"><svg viewBox="0 0 12 12"><path d="M4 2h7v5H8M1 5h7v6H1z" fill="none" stroke="#000" stroke-width="1.500" /></svg></button>
                <button type="button" aria-label="Close"><svg viewBox="0 0 12 12"><path d="M2 2l8 8M10 2l-8 8" stroke="#000" stroke-width="2" /></svg></button>
            </div>
            <div class="dockicons">
                <svg viewBox="0 0 24 24"><use href="#axes" /></svg>
                <svg viewBox="0 0 16 16"><circle cx="8" cy="8" r="7" fill="#666" stroke="#aaa" /><path d="M8 2a6 6 0 0 0 0 12z" fill="#aaa" /><path d="M8 2v6l3 4" fill="none" stroke="#333" /></svg>
                <svg viewBox="0 0 16 16"><path d="M1 15L11 5" stroke="#999" stroke-width="2" /><path d="M15 1l-2 8-6-6z" fill="#999" /></svg>
            </div>
            <div class="channels"></div>
            <span class="hsplit"></span>
            <div class="tabs layertabs">
                <button type="button" class="active">Display</button><button type="button">Render</button><button type="button">Anim</button>
            </div>
            <div class="layerpanel">
                <nav class="panelmenu">
                    <button type="button">Layers</button><button type="button">Options</button><button type="button">Help</button>
                </nav>
                <div class="layericons">
                    <svg viewBox="0 0 20 16"><path d="M3 15V3" stroke="#d02020" stroke-width="1.500" /><path d="M0 5l3-5 3 5z" fill="#d02020" /><g fill="#888"><use href="#layers" /></g></svg>
                    <svg viewBox="0 0 20 16"><path d="M3 0v12" stroke="#d02020" stroke-width="1.500" /><path d="M0 11l3 5 3-5z" fill="#d02020" /><g fill="#fff"><use href="#layers" /></g></svg>
                    <svg viewBox="0 0 20 20"><use href="#sheet" /></svg>
                    <svg viewBox="0 0 20 20"><use href="#sheet" /><circle cx="7" cy="10" r="4" fill="url(#gBall)" /></svg>
                </div>
                <div class="layerlist">
                    <button type="button" class="lv">V</button>
                    <button type="button" class="lv" aria-label="Display type"></button>
                    <svg class="lslash" viewBox="0 0 16 14"><path d="M.5 0v14" stroke="#111" /><path d="M1 14L14 0M15.500 0v14" stroke="#ccc" /></svg>
                    <span>Zone_Induction_Hob_Bosch_layer1</span>
                </div>
            </div>
        </aside>

        <div class="sidetabs">
            <button type="button" class="active">Channel Box / Layer Editor</button>
            <button type="button">Attribute Editor</button>
        </div>

        <section class="outliner">
            <header class="wintitle">
                <svg class="i16"><use href="#maya" /></svg>
                <h2>Outliner</h2>
                <div class="winbtns">
                    <button type="button" aria-label="Minimize"><svg viewBox="0 0 16 14"><path d="M4 11h6" stroke="#000" stroke-width="2" /></svg></button>
                    <button type="button" aria-label="Maximize"><svg viewBox="0 0 16 14"><path d="M3 2v10h9V2" fill="none" stroke="#000" /><path d="M3 3h9" stroke="#000" stroke-width="2" /></svg></button>
                    <button type="button" class="close" aria-label="Close"><svg viewBox="0 0 16 14"><path d="M4 3l7 8M11 3l-7 8" stroke="#000" stroke-width="2" /></svg></button>
                </div>
            </header>
            <nav class="panelmenu">
                <button type="button">Display</button><button type="button">Show</button><button type="button">Help</button>
            </nav>
            <div class="search">
                <svg viewBox="0 0 18 18"><path d="M1 1l6 3-6 3zM11 1l6 3-6 3zM1 11l6 3-6 3zM11 11l6 3-6 3z" fill="#5a5a5a" /><path d="M3 9v2M14 8v3M6 1h5M6 17h5" stroke="#5a5a5a" /></svg>
                <input type="text" aria-label="Filter">
            </div>
            <div class="treewrap">
                <ul class="tree">
                    <li>
                        <button type="button" class="exp" aria-label="Collapse"></button>
                        <svg viewBox="0 0 20 16"><path d="M7 1h12l-6 14H1z" fill="#f0f0f0" stroke="#111" /><path d="M0 8h9" stroke="#d02020" stroke-width="2" /><path d="M8 4l6 4-6 4z" fill="#d02020" /></svg>
                        <span>FBXASC053_Zone_Induction_Hob_Bosch</span>
                        <svg class="links" viewBox="0 0 24 56"><path d="M3.500 13v37.500H21M3.500 30.500H21" fill="none" stroke="#ccc" shape-rendering="crispEdges" /><circle cx="3.500" cy="10.500" r="2" fill="none" stroke="#ccc" /></svg>
                    </li>
                    <li class="child"><svg viewBox="0 0 20 16"><use href="#mesh" /></svg><span>Induction_Hob_Paart_1</span></li>
                    <li class="child"><svg viewBox="0 0 20 16"><use href="#mesh" /></svg><span>Induction_Hob_Paart_2</span></li>
                    <li class="off"><svg viewBox="0 0 20 20"><use href="#camera" /></svg><span>persp</span></li>
                    <li class="off"><svg viewBox="0 0 20 20"><use href="#camera" /></svg><span>top</span></li>
                    <li class="off"><svg viewBox="0 0 20 20"><use href="#camera" /></svg><span>front</span></li>
                    <li class="off"><svg viewBox="0 0 20 20"><use href="#camera" /></svg><span>side</span></li>
                    <li><svg viewBox="0 0 20 20"><use href="#set" /></svg><span>defaultLightSet</span></li>
                    <li><svg viewBox="0 0 20 20"><use href="#set" /></svg><span>defaultObjectSet</span></li>
                </ul>
                <div class="vscroll"><button type="button" class="arr up" aria-label="Scroll up"></button><div class="thumb"></div><button type="button" class="arr up" aria-label="Scroll up"></button><button type="button" class="arr down" aria-label="Scroll down"></button></div>
            </div>
            <div class="hscroll"><button type="button" class="arr left" aria-label="Scroll left"></button><div class="thumb"></div><button type="button" class="arr left" aria-label="Scroll left"></button><button type="button" class="arr rightarr" aria-label="Scroll right"></button></div>
            <span class="hsplit"></span>
        </section>
    </main>

    <section class="time">
        <span class="grip"></span>
        <div class="ruler" id="ruler"></div>
        <input type="text" class="num" value="1.00" aria-label="Current time">
        <div class="play">
            <button type="button" aria-label="Go to start"><svg viewBox="0 0 20 16"><path d="M2 1h2v14H2zM11 2v12L4 8zM18 2v12l-7-6z" /></svg></button>
            <button type="button" aria-label="Step back frame"><svg viewBox="0 0 20 16"><path d="M3 1h3v14H3zM17 2v12L7 8z" /></svg></button>
            <button type="button" aria-label="Step back key"><svg viewBox="0 0 20 16"><path d="M3 1h3v14H3zM17 2v12L7 8z" /><path d="M4 0v16" class="key" /></svg></button>
            <button type="button" aria-label="Play backwards"><svg viewBox="0 0 20 16"><path d="M16 1v14L4 8z" /></svg></button>
            <button type="button" aria-label="Play forwards"><svg viewBox="0 0 20 16"><path d="M4 1v14l12-7z" /></svg></button>
            <button type="button" aria-label="Step forward key"><svg viewBox="0 0 20 16"><path d="M14 1h3v14h-3zM3 2v12l10-6z" /><path d="M16 0v16" class="key" /></svg></button>
            <button type="button" aria-label="Step forward frame"><svg viewBox="0 0 20 16"><path d="M14 1h3v14h-3zM3 2v12l10-6z" /></svg></button>
            <button type="button" aria-label="Go to end"><svg viewBox="0 0 20 16"><path d="M16 1h2v14h-2zM2 2v12l7-6zM9 2v12l7-6z" /></svg></button>
        </div>
    </section>

    <section class="range">
        <span class="grip"></span>
        <input type="text" class="num" value="1.00" aria-label="Animation start">
        <input type="text" class="num" value="1.00" aria-label="Playback start">
        <div class="track">
            <div class="bar"><i></i><span>1</span><span class="end">24</span><i></i></div>
        </div>
        <input type="text" class="num" value="24.00" aria-label="Playback end">
        <input type="text" class="num" value="48.00" aria-label="Animation end">
        <i class="tri"></i>
        <select class="num wide" aria-label="Anim layer"><option>No Anim Layer</option></select>
        <i class="tri"></i>
        <select class="num wide" aria-label="Character set"><option>No Character Set</option></select>
        <svg class="keyicon" viewBox="0 0 18 12"><circle cx="4" cy="5" r="3" fill="none" stroke="#999" stroke-width="1.500" /><path d="M7 5h11M13 5v5M16 5v4" stroke="#999" stroke-width="1.500" /></svg>
    </section>

    <section class="command">
        <span class="grip"></span>
        <label for="mel">MEL</label>
        <input id="mel" type="text">
        <output class="result"></output>
        <svg class="script" viewBox="0 0 14 15"><path d="M1 1h12v13H1z" fill="#eee" stroke="#fff" /><path d="M1 1h12v3H1z" fill="#68a0d0" /><path d="M3 6h8v3H3zM3 10h8v3H3z" fill="#aaa" stroke="#444" /></svg>
    </section>

    <footer class="helpline">
        <div class="helpbox"><svg viewBox="0 0 14 14"><path d="M1 14L14 1M5 14l9-9M9 14l5-5" stroke="#999" stroke-width="1.500" /></svg></div>
        <div class="minwin">
            <svg class="i16"><use href="#maya" /></svg>
            <span>C:\Users\Us...</span>
            <div class="winbtns">
                <button type="button" aria-label="Restore"><svg viewBox="0 0 16 14"><path d="M6 5V2h6v5H9M3 5h6v6H3z" fill="none" stroke="#000" stroke-width="1.500" /></svg></button>
                <button type="button" aria-label="Maximize"><svg viewBox="0 0 16 14"><path d="M3 2v10h9V2" fill="none" stroke="#000" /><path d="M3 3h9" stroke="#000" stroke-width="2" /></svg></button>
                <button type="button" class="close" aria-label="Close"><svg viewBox="0 0 16 14"><path d="M4 3l7 8M11 3l-7 8" stroke="#000" stroke-width="2" /></svg></button>
            </div>
        </div>
    </footer>

    <svg class="badge" viewBox="0 0 25 54"><path d="M25 0H4C1 0 0 1 0 5v33c0 2 2 4 5 6l20 10z" fill="#fff" /><path d="M4 6h21v20H4z" fill="#0a8cf0" /><circle cx="14" cy="16" r="9" fill="#fff" /><path d="M6 16l4-4v3h8v-3l4 4-4 4v-3h-8v3z" fill="#1478d8" /></svg>

    <script>
        var ruler = document.getElementById('ruler');
        for (var i = 1; i <= 24; i++) {
            var cell = document.createElement('div');
            cell.className = i == 1 ? 'frame current' : 'frame';
            cell.innerHTML = '<span>' + i + '</span>' + (i == 1 ? '<b>1</b>' : '');
            ruler.appendChild(cell);
        }
    </script>
</body>

</html>
```

FILE: styles.css
```css
* {
    box-sizing: border-box;
}

body {
    margin: 0;
    height: 100vh;
    display: flex;
    flex-direction: column;
    overflow: hidden;
    background-color: #444;
    border-bottom: 4px solid #d4d0c8;
    color: #c8c8c8;
    font-family: "DejaVu Sans Condensed", "DejaVu Sans", sans-serif;
    font-size: 11px;
    line-height: 14px;
}

.defs {
    position: absolute;
}

button, input, select {
    font: inherit;
    color: inherit;
    margin: 0;
    padding: 0;
    border: 0;
    background: none;
    border-radius: 0;
}

svg {
    display: block;
    flex: none;
}

h1, h2 {
    margin: 0;
    font-size: 11px;
    font-weight: bold;
    white-space: nowrap;
}

.i16 {
    width: 14px;
    height: 16px;
}

/* dotted handles */
.grip {
    flex: none;
    width: 5px;
    height: 24px;
    margin-left: 5px;
    background-image: radial-gradient(#2a2a2a 1px, transparent 1px), radial-gradient(#666 1px, transparent 1px);
    background-size: 4px 6px;
    background-position: 0 0, 2px 3px;
}

.hsplit, .dots, .hgrip {
    display: block;
    height: 3px;
    background: repeating-linear-gradient(90deg, #303030 0 2px, #5c5c5c 2px 3px, #444 3px 5px);
}

/* window title bars */
.titlebar {
    height: 19px;
    flex: none;
    display: flex;
    align-items: center;
    gap: 2px;
    padding: 0 2px 0 4px;
    border-bottom: 1px solid #d4d0c8;
    background: linear-gradient(90deg, #0a246a, #a6caf0);
    color: #fff;
}

.winbtns {
    margin-left: auto;
    display: flex;
}

.winbtns button {
    width: 16px;
    height: 14px;
    background-color: #d4d0c8;
    border: 1px solid;
    border-color: #fff #404040 #404040 #fff;
}

.winbtns svg {
    width: 14px;
    height: 12px;
}

.winbtns .close {
    margin-left: 2px;
}

/* menus */
.menubar {
    height: 20px;
    flex: none;
    display: flex;
    align-items: center;
    gap: 14px;
    padding: 0 8px;
    border-bottom: 1px solid #2b2b2b;
    white-space: nowrap;
}

.panelmenu {
    height: 20px;
    display: flex;
    align-items: center;
    gap: 13px;
    padding-left: 7px;
}

/* status line */
.status {
    height: 33px;
    flex: none;
    display: flex;
    align-items: center;
    padding-bottom: 1px;
    border-bottom: 1px solid #2b2b2b;
}

.status .grip {
    margin-right: 2px;
}

.menuset {
    appearance: none;
    width: 100px;
    height: 20px;
    margin-bottom: 3px;
    padding-left: 4px;
    border: 1px solid #2e2e2e;
    border-radius: 2px;
    background: linear-gradient(45deg, transparent 50%, #ccc 50%) no-repeat right 8px top 7px / 4px 4px, linear-gradient(315deg, transparent 50%, #ccc 50%) no-repeat right 4px top 7px / 4px 4px, linear-gradient(#383838, #383838) no-repeat right 16px top 0 / 1px 20px, linear-gradient(#606060, #525252);
}

.sep {
    flex: none;
    width: 10px;
    height: 24px;
    background: linear-gradient(#2a2a2a, #2a2a2a) no-repeat 4px 0 / 1px 100%, linear-gradient(#777, #777) no-repeat 5px 8px / 2px 8px, linear-gradient(#5a5a5a, #5a5a5a) no-repeat 5px 0 / 1px 100%;
}

.tool {
    flex: none;
    width: 26px;
    height: 26px;
    padding: 1px;
}

.tool svg {
    width: 24px;
    height: 24px;
}

.tool.on {
    padding: 0;
    border: 1px solid #2a2a2a;
    border-radius: 3px;
    background-color: #5a5a5a;
}

.tool.help {
    color: #78b8e8;
    font-size: 18px;
    font-weight: bold;
}

.more, .mask {
    flex: none;
    width: 10px;
    height: 24px;
    background: linear-gradient(45deg, #888 50%, transparent 50%) no-repeat 3px 8px / 4px 4px, linear-gradient(135deg, #888 50%, transparent 50%) no-repeat 3px 12px / 4px 4px;
}

.mask {
    width: 21px;
    background: linear-gradient(#999, #999) no-repeat 6px 6px / 8px 1px, linear-gradient(#999, #999) no-repeat 6px 9px / 8px 1px, linear-gradient(#999, #999) no-repeat 6px 17px / 8px 1px, linear-gradient(#999, #999) no-repeat 8px 11px / 4px 2px, linear-gradient(#999, #999) no-repeat 9px 13px / 2px 2px;
}

.gap3 {
    flex: none;
    width: 3px;
}

.tri, .droparrow {
    flex: none;
    width: 9px;
    height: 6px;
    background-color: #8a8a8a;
    clip-path: polygon(0 0, 100% 0, 50% 100%);
}

.status .droparrow {
    margin: 0 4px 0 6px;
}

.xyz {
    width: 16px;
    height: 16px;
}

.status label {
    width: 12px;
    margin-left: 1px;
    text-align: right;
}

.status .xyz + label {
    margin-left: 3px;
}

.status input, .search input, .num, .command input {
    background-color: #2a2a2a;
    border: 1px solid #555;
    border-radius: 3px;
}

.status input {
    width: 39px;
    height: 25px;
}

.status .right {
    margin-left: auto;
    padding-right: 3px;
    display: flex;
}

/* shelf */
.shelf {
    height: 73px;
    flex: none;
    display: flex;
    border-bottom: 1px solid #2b2b2b;
}

.shelf > .grip {
    height: 64px;
    margin-top: 4px;
}

.shelfmenu {
    width: 18px;
    height: 66px;
    margin: 3px 5px 0 5px;
    border: 1px solid #2a2a2a;
    display: flex;
    flex-direction: column;
    justify-content: flex-end;
    align-items: center;
    gap: 10px;
    padding-bottom: 6px;
}

.shelfmenu .sq {
    width: 12px;
    height: 9px;
    background-color: #7a7a7a;
    box-shadow: 0 4px #444, 0 5px #bbb;
}

.shelfmain {
    flex: 1;
    min-width: 0;
    padding-right: 4px;
}

.tabs {
    display: flex;
    align-items: flex-end;
    height: 25px;
    padding-top: 4px;
}

.tabs button {
    height: 17px;
    padding: 0 12px;
    border: 1px solid #2a2a2a;
    border-bottom: 0;
    border-left: 0;
    background: linear-gradient(#4a4a4a, #404040);
}

.tabs .active {
    height: 21px;
    border: 0;
    border-radius: 3px 3px 0 0;
    background: #646464;
}

.shelftabs {
    display: grid;
    grid-template-columns: 62px 60px 68px 70px 62px 85px 73px 71px 75px 84px 49px 58px 53px 42px 45px 58px 59px 1fr;
}

.shelftabs button {
    padding: 0;
}

.trash {
    width: 14px;
    height: 16px;
    margin: 0 2px 2px auto;
}

.shelfbody {
    padding: 1px;
    border: 1px solid #2a2a2a;
    border-top: 2px solid #606060;
    border-radius: 2px;
}

.shelfinner {
    height: 38px;
    display: flex;
    align-items: center;
    padding: 0 3px 0 1px;
    gap: 5px;
    border: 2px solid #363636;
    border-radius: 3px;
}

.shelfbtn svg {
    width: 30px;
    height: 30px;
}

.spin {
    margin-left: auto;
    display: flex;
    flex-direction: column;
    gap: 1px;
}

/* scroll arrows */
.arr {
    flex: none;
    width: 14px;
    height: 14px;
    display: flex;
    align-items: center;
    justify-content: center;
    border: 1px solid #2a2a2a;
    box-shadow: inset 0 0 0 1px #5c5c5c;
}

.arr::after {
    content: "";
    width: 8px;
    height: 4px;
    background-color: #ccc;
    clip-path: polygon(50% 0, 100% 100%, 0 100%);
}

.arr.down::after {
    clip-path: polygon(0 0, 100% 0, 50% 100%);
}

.arr.left::after, .arr.rightarr::after {
    width: 4px;
    height: 8px;
    clip-path: polygon(100% 0, 100% 100%, 0 50%);
}

.arr.rightarr::after {
    clip-path: polygon(0 0, 100% 50%, 0 100%);
}

.spin .arr {
    height: 15px;
    background-color: #5c5c5c;
}

/* work area */
.work {
    flex: 1;
    min-height: 0;
    display: flex;
    position: relative;
    padding: 2px 0 1px;
    border-bottom: 1px solid #2b2b2b;
}

.toolbox {
    width: 46px;
    flex: none;
    display: flex;
    flex-direction: column;
}

.hgrip {
    margin: 7px 8px 2px 5px;
}

.tbframe {
    flex: 1;
    margin: 0 4px 0 3px;
    padding-left: 1px;
    border: 1px solid #2a2a2a;
    border-right-color: #5a5a5a;
    border-bottom-color: #5a5a5a;
}

.big {
    display: block;
    width: 35px;
    height: 35px;
    margin-bottom: 2px;
    border: 1px solid #666;
    border-radius: 2px;
    box-shadow: 0 0 0 1px #303030;
}

.big svg {
    width: 33px;
    height: 33px;
}

.big.active {
    background-color: #979797;
}

.layouts {
    padding-top: 11px;
}

.lay {
    display: block;
    width: 34px;
    height: 34px;
    margin-bottom: 4px;
    border: 1px solid #222;
    border-radius: 2px;
    overflow: hidden;
}

.lay svg {
    width: 32px;
    height: 32px;
}

.lay.blank {
    width: 32px;
    height: 32px;
    border-color: #5a5a5a #2a2a2a #2a2a2a #5a5a5a;
}

.lay .tri {
    display: block;
    width: 5px;
    height: 4px;
    margin: auto;
}

.logo {
    width: 31px;
    height: 31px;
    margin: 3px 0 5px 7px;
    border: 1px solid #888;
    border-radius: 3px;
    overflow: hidden;
}

.panel {
    flex: 1;
    min-width: 0;
    display: flex;
    flex-direction: column;
    border: 1px solid #888;
}

.panelbar {
    height: 20px;
    display: flex;
    align-items: center;
    padding-bottom: 2px;
}

.panelbar .sep {
    width: 11px;
    height: 18px;
    background-position: 3px 0, 4px 5px, 4px 0;
}

.panelbar button {
    width: 20px;
    height: 18px;
    padding: 0 1px;
}

.panelbar svg {
    width: 18px;
    height: 18px;
}

.panelbar .on {
    border-radius: 3px;
    background-color: #606060;
    box-shadow: inset 0 0 0 1px #2a2a2a;
}

.view {
    flex: 1;
    min-height: 0;
    background: linear-gradient(#8092aa, #62707f 28%, #49545d 52%, #3f454e 64%, #2f3439 78%, #202426 92%, #1a1b1c);
}

.view svg {
    width: 100%;
    height: 100%;
}

.axis {
    font-family: "Liberation Mono", monospace;
    font-size: 12px;
    font-weight: bold;
}

.vsplit {
    width: 9px;
    flex: none;
    background: repeating-linear-gradient(#2c2c2c 0 2px, #5c5c5c 2px 3px, #444 3px 5px) no-repeat 4px 254px / 3px 256px;
}

/* channel box / layer editor */
.dock {
    width: 422px;
    flex: none;
    display: flex;
    flex-direction: column;
    padding-left: 1px;
}

.docktitle {
    height: 17px;
    display: flex;
    align-items: center;
    gap: 1px;
}

.docktitle .dots {
    flex: 1;
}

.docktitle span {
    padding: 0 12px;
}

.docktitle button {
    width: 14px;
    height: 14px;
    border: 1px solid #222;
    border-radius: 3px;
    background-color: #555;
}

.docktitle svg {
    width: 12px;
    height: 12px;
}

.dockicons {
    height: 45px;
    display: flex;
    justify-content: flex-end;
    gap: 5px;
    padding: 4px 1px 0 0;
}

.dockicons svg {
    width: 16px;
    height: 16px;
}

.channels {
    flex: 1;
    border: 2px solid #5a5a5a;
    border-radius: 2px;
    background-color: #2a2a2a;
}

.dock > .hsplit {
    width: 138px;
    margin: 4px auto 2px;
}

.layertabs {
    height: 23px;
}

.layertabs button {
    padding: 0 11px 0 13px;
}

.layertabs .active {
    height: 20px;
    padding: 0 12px 0 9px;
}

.layerpanel {
    height: 188px;
    display: flex;
    flex-direction: column;
    padding: 0 4px 4px;
    border: 1px solid #2a2a2a;
    border-top-color: #5a5a5a;
}

.layerpanel .panelmenu {
    gap: 15px;
    padding: 2px 0 0 4px;
}

.layericons {
    height: 28px;
    display: flex;
    justify-content: flex-end;
    align-items: center;
    gap: 5px;
    padding-right: 1px;
}

.layericons svg {
    width: 20px;
    height: 18px;
}

.layerlist {
    flex: 1;
    display: flex;
    align-items: flex-start;
    gap: 3px;
    padding: 5px 4px;
    border: 1px solid #222;
    border-radius: 2px;
    background-color: #2a2a2a;
    color: #fff;
}

.lv {
    width: 20px;
    height: 14px;
    border: 1px solid #1a1a1a;
    border-radius: 2px;
    line-height: 12px;
}

.lslash {
    width: 16px;
    height: 14px;
}

.sidetabs {
    width: 25px;
    flex: none;
    padding-left: 3px;
    display: flex;
    flex-direction: column;
    gap: 1px;
}

.sidetabs button {
    writing-mode: vertical-rl;
    width: 19px;
    height: 98px;
    border: 1px solid #2a2a2a;
    border-radius: 0 3px 3px 0;
}

.sidetabs .active {
    width: 22px;
    height: 152px;
    border: 0;
    background-color: #646464;
}

/* floating outliner */
.outliner {
    position: absolute;
    top: 40px;
    right: 126px;
    width: 317px;
    height: 502px;
    display: flex;
    flex-direction: column;
    background-color: #444;
    border: 3px solid #d4d0c8;
    box-shadow: inset 1px 1px #d4d0c8, 0 0 0 1px #303030;
}

.wintitle, .minwin {
    display: flex;
    align-items: center;
    gap: 2px;
    padding: 0 2px 0 4px;
    background: linear-gradient(90deg, #808080, #c0c0c0);
    color: #d4d0c8;
}

.wintitle {
    height: 20px;
    border-top: 1px solid #d4d0c8;
    border-bottom: 1px solid #d4d0c8;
}

.outliner .panelmenu {
    height: 23px;
    padding-left: 10px;
}

.search {
    display: flex;
    align-items: center;
    gap: 5px;
    padding: 1px 3px 5px 5px;
}

.search svg {
    width: 18px;
    height: 18px;
}

.search input {
    flex: 1;
    height: 19px;
}

.treewrap {
    flex: 1;
    display: flex;
    gap: 2px;
    padding: 0 3px 0 4px;
}

.tree {
    flex: 1;
    margin: 0;
    padding: 0;
    list-style: none;
    background-color: #2a2a2a;
}

.tree li {
    position: relative;
    height: 20px;
    display: flex;
    align-items: center;
    gap: 10px;
    padding-left: 43px;
    white-space: nowrap;
}

.tree li > svg {
    width: 19px;
    height: 16px;
}

.tree .child {
    gap: 31px;
}

.tree .child::after {
    content: "";
    position: absolute;
    left: 82px;
    top: 8px;
    width: 5px;
    height: 5px;
    border: 1px solid #ccc;
    border-radius: 3px;
}

.tree .off {
    color: #6a6a6a;
}

.exp {
    position: absolute;
    left: 2px;
    top: 5px;
    width: 11px;
    height: 11px;
    border: 1px solid #ccc;
    background: linear-gradient(#ccc, #ccc) no-repeat center / 7px 1px;
}

.tree li > .links {
    position: absolute;
    left: 61px;
    top: 0;
    width: 24px;
    height: 56px;
}

.vscroll {
    width: 14px;
    display: flex;
    flex-direction: column;
    gap: 1px;
}

.vscroll .thumb, .hscroll .thumb {
    flex: 1;
    border: 1px solid #2a2a2a;
    box-shadow: inset 0 0 0 1px #5c5c5c;
}

.hscroll {
    display: flex;
    gap: 1px;
    padding: 2px 20px 0 4px;
}

.hscroll .thumb {
    background: radial-gradient(#222 1px, transparent 1px) center / 4px 4px;
    background-clip: content-box;
    padding: 2px 109px;
}

.outliner .hsplit {
    width: 98px;
    margin: 4px auto 3px;
}

/* time slider */
.time {
    height: 37px;
    flex: none;
    display: flex;
    align-items: flex-start;
    padding-top: 2px;
    border-bottom: 1px solid #2b2b2b;
}

.time .grip {
    height: 28px;
    margin-right: 3px;
}

.ruler {
    flex: 1;
    height: 30px;
    display: flex;
    padding: 0 11px 0 8px;
    background-color: #757575;
    border-top: 1px solid #2a2a2a;
    border-right: 1px solid #2a2a2a;
    color: #000;
    margin-right: 4px;
}

.frame {
    flex: 1;
    padding-left: 13px;
    line-height: 12px;
    background: linear-gradient(#000, #000) no-repeat 0 15px / 2px 14px;
}

.frame.current {
    background-color: #5c5c5c;
}

.frame b {
    display: block;
    margin-top: 2px;
    color: #fff;
    font-weight: normal;
}

.num {
    width: 69px;
    height: 20px;
    padding: 0 4px;
}

.time .num {
    margin-top: 5px;
}

.play {
    width: 229px;
    display: flex;
    gap: 8px;
    padding: 9px 0 0 7px;
}

.play button {
    flex: none;
    width: 20px;
    height: 16px;
}

.play svg {
    width: 20px;
    height: 16px;
    fill: #c4c4c4;
    stroke: #2a2a2a;
}

.play .key {
    stroke: #e02020;
}

/* range slider */
.range {
    height: 28px;
    flex: none;
    display: flex;
    align-items: center;
    gap: 3px;
    padding-right: 25px;
    border-bottom: 1px solid #2b2b2b;
}

.range .tri {
    margin: 0 3px;
}

.range .wide {
    width: 102px;
    appearance: none;
}

.track {
    flex: 1;
    height: 21px;
    padding: 3px 0 0 8px;
    background-color: #222;
    border-bottom: 1px solid #777;
    border-right: 1px solid #777;
}

.bar {
    width: 656px;
    height: 17px;
    display: flex;
    align-items: center;
    gap: 5px;
    padding: 0 4px;
    background-color: #636363;
}

.bar i {
    width: 9px;
    height: 11px;
    border-right: 1px solid #222;
    border-bottom: 1px solid #222;
}

.bar .end {
    margin-left: auto;
}

.keyicon {
    width: 18px;
    height: 12px;
}

/* command line */
.command {
    height: 31px;
    flex: none;
    display: flex;
    align-items: center;
    padding-right: 5px;
    border-bottom: 1px solid #2b2b2b;
}

.command label {
    width: 49px;
    padding-left: 14px;
}

.command input {
    flex: 1;
    height: 25px;
    margin-right: 6px;
}

.result {
    flex: 1;
    height: 25px;
    background-color: #000;
    border: 1px solid #222;
}

.script {
    width: 14px;
    height: 15px;
    margin-left: 3px;
}

.helpline {
    height: 29px;
    flex: none;
    position: relative;
    padding: 4px 3px 3px 13px;
}

.helpbox {
    height: 22px;
    display: flex;
    justify-content: flex-end;
    align-items: flex-end;
    border: 1px solid #2a2a2a;
    border-bottom-color: #666;
    border-right-color: #666;
}

.helpbox svg {
    width: 14px;
    height: 14px;
}

/* minimized script window */
.minwin {
    position: absolute;
    left: 0;
    bottom: 1px;
    width: 158px;
    height: 23px;
    border: 2px solid #d4d0c8;
    font-weight: bold;
    white-space: nowrap;
}

.badge {
    position: absolute;
    right: 0;
    bottom: 54px;
    width: 25px;
    height: 54px;
}
```
